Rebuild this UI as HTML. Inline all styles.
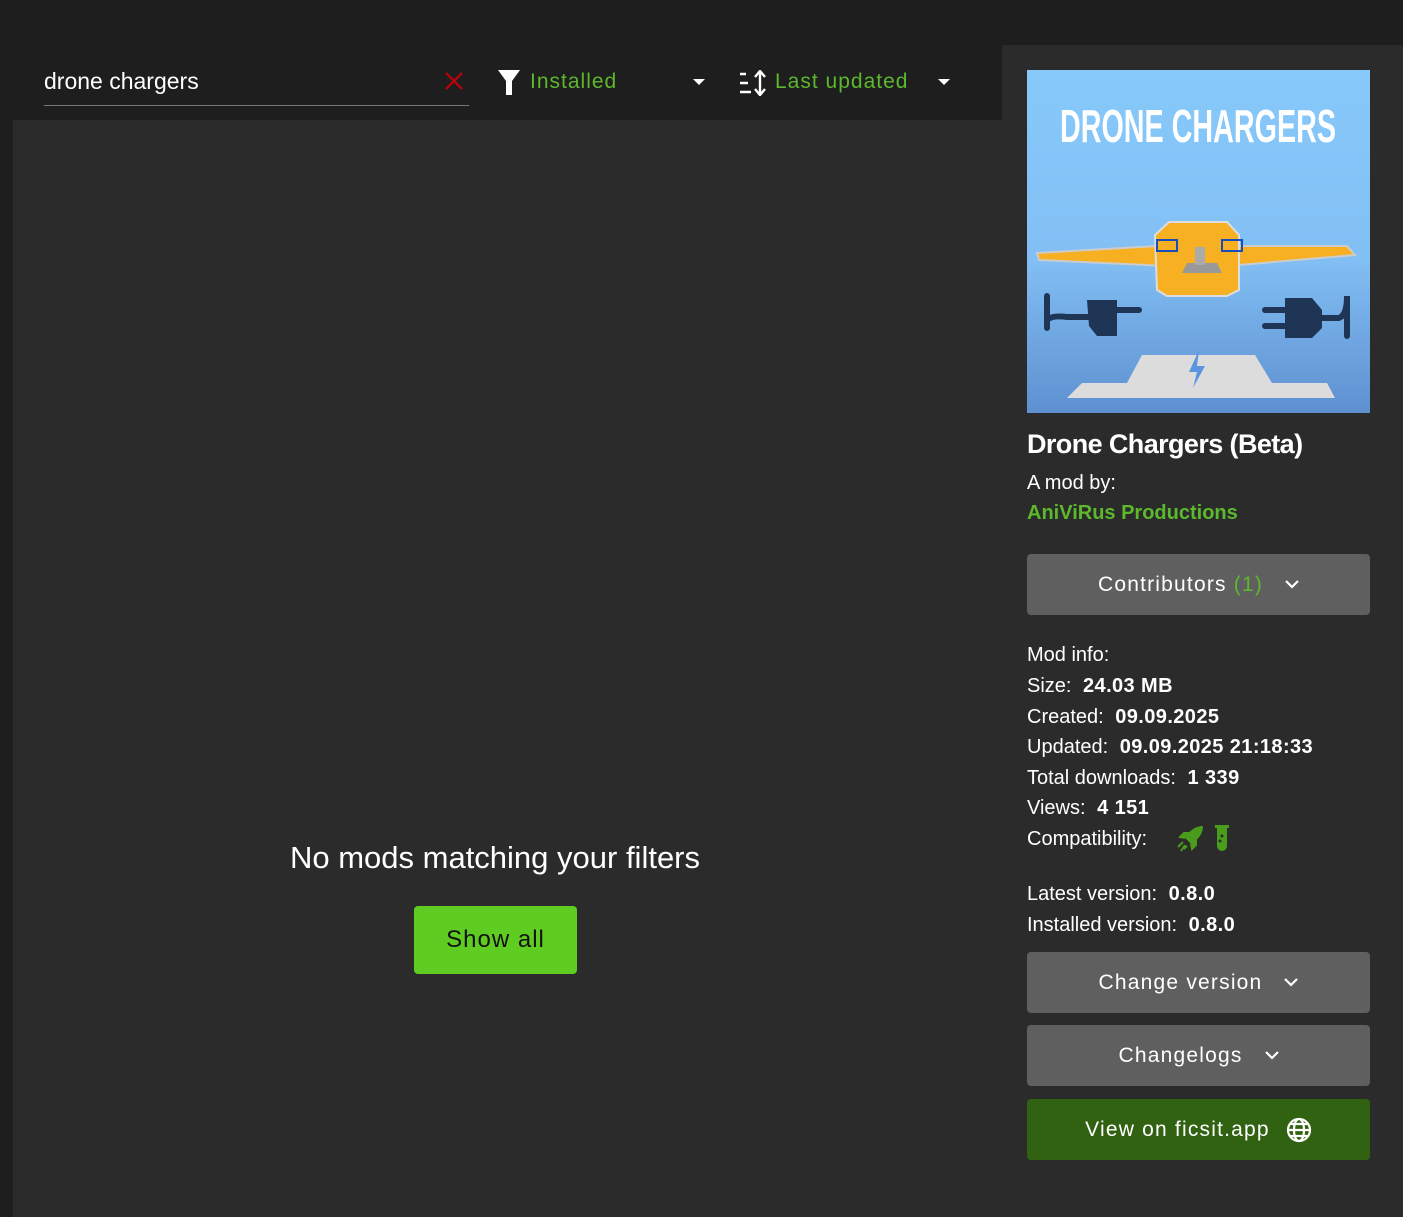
<!DOCTYPE html>
<html><head><meta charset="utf-8"><style>
*{margin:0;padding:0;box-sizing:border-box}
body{width:1403px;height:1217px;background:#1e1e1e;font-family:"Liberation Sans",sans-serif;color:#fff;position:relative;overflow:hidden}
.a{position:absolute}
.left{left:13px;top:120px;width:989px;height:1097px;background:#2b2b2b}
.right{left:1002px;top:45px;width:401px;height:1172px;background:#2b2b2b}
.btn{position:absolute;left:1027px;width:343px;height:61px;background:#5f5f5f;border-radius:4px;display:flex;align-items:center;justify-content:center;font-size:21px;letter-spacing:1.2px;color:#fff}
.info{position:absolute;left:1027px;font-size:20px;white-space:nowrap}
.info b{margin-left:6px;letter-spacing:.4px}
</style></head><body>
<div class="a left"></div>
<div class="a right"></div>
<div class="a" style="left:44px;top:68px;font-size:23px">drone chargers</div>
<div class="a" style="left:44px;top:105px;width:425px;height:1px;background:#777"></div>
<svg class="a" style="left:444px;top:71px" width="20" height="20"><path d="M2 2L18 18M18 2L2 18" stroke="#c0000a" stroke-width="2.2"/></svg>
<svg class="a" style="left:498px;top:70px" width="22" height="25"><path d="M0 0H22L14 11V25H8V11Z" fill="#fff"/></svg>
<div class="a" style="left:530px;top:70px;font-size:21px;color:#5cb82c;letter-spacing:1px">Installed</div>
<svg class="a" style="left:693px;top:79px" width="12" height="7"><path d="M0 0H12L6 6Z" fill="#fff"/></svg>
<svg class="a" style="left:740px;top:70px" width="28" height="26"><path d="M0 4H6M0 13H8M0 22H11" stroke="#fff" stroke-width="2.4"/><path d="M20 2V24M15 7L20 1L25 7M15 19L20 25L25 19" stroke="#fff" stroke-width="2.4" fill="none"/></svg>
<div class="a" style="left:775px;top:70px;font-size:21px;color:#5cb82c;letter-spacing:1px">Last updated</div>
<svg class="a" style="left:938px;top:79px" width="12" height="7"><path d="M0 0H12L6 6Z" fill="#fff"/></svg>
<div class="a" style="left:0;width:990px;top:840px;text-align:center;font-size:31px">No mods matching your filters</div>
<div class="a" style="left:414px;top:906px;width:163px;height:68px;background:#5fcc22;border-radius:4px;color:#111;font-size:24px;letter-spacing:1px;display:flex;align-items:center;justify-content:center">Show all</div>
<svg class="a" style="left:1027px;top:70px" width="343" height="343" viewBox="0 0 343 343">
<defs><linearGradient id="g" x1="0" y1="0" x2="0" y2="1"><stop offset="0" stop-color="#87c9fb"/><stop offset=".55" stop-color="#82bff4"/><stop offset="1" stop-color="#5e90d0"/></linearGradient></defs>
<rect width="343" height="343" fill="url(#g)"/>
<text x="171" y="72" text-anchor="middle" font-family="Liberation Sans Narrow,Liberation Sans,sans-serif" font-weight="bold" font-size="46" fill="#fff" textLength="276" lengthAdjust="spacingAndGlyphs">DRONE CHARGERS</text>
<path d="M10 183L130 176H320L328 185L200 196H140L12 190Z" fill="#f8b023" stroke="#ccc" stroke-width="2"/>
<path d="M128 165L142 152H200L212 165V220L200 226H140L130 220Z" fill="#f8b023" stroke="#ddd" stroke-width="2"/>
<path d="M160 193H190L195 203H155Z" fill="#999"/><rect x="168" y="177" width="10" height="18" fill="#aaa"/>
<rect x="130" y="170" width="20" height="11" fill="none" stroke="#1a4db8" stroke-width="2"/><rect x="195" y="170" width="20" height="11" fill="none" stroke="#1a4db8" stroke-width="2"/>
<path d="M60 230H90V266H70L62 256Z" fill="#1f3555"/><path d="M90 240H112M20 226V258M20 250Q25 245 40 247H62" stroke="#1f3555" stroke-width="6" fill="none" stroke-linecap="round"/>
<path d="M258 228H285L295 240V258L285 268H258Z" fill="#1f3555"/><path d="M238 240H258M238 256H258M295 248H312Q320 245 320 226V266" stroke="#1f3555" stroke-width="6" fill="none" stroke-linecap="round"/>
<path d="M115 285H228L245 313H300L308 328H40L55 313H100Z" fill="#dcdcdc"/>
<path d="M172 280L162 302H170L166 318L178 296H170Z" fill="#5b95e0"/>
</svg>
<div class="a" style="left:1027px;top:429px;font-size:27px;font-weight:bold;letter-spacing:-.6px">Drone Chargers (Beta)</div>
<div class="info" style="top:472px">A mod by:</div>
<div class="info" style="top:502px;color:#5cb82c;font-weight:bold">AniViRus Productions</div>
<div class="btn" style="top:554px">Contributors&nbsp;<span style="color:#5cb82c">(1)</span><svg style="margin-left:22px" width="14" height="9"><path d="M1 1L7 7L13 1" stroke="#fff" stroke-width="2.2" fill="none"/></svg></div>
<div class="info" style="top:644px">Mod info:</div>
<div class="info" style="top:675px">Size: <b>24.03 MB</b></div>
<div class="info" style="top:706px">Created: <b>09.09.2025</b></div>
<div class="info" style="top:736px">Updated: <b>09.09.2025 21:18:33</b></div>
<div class="info" style="top:767px">Total downloads: <b>1 339</b></div>
<div class="info" style="top:797px">Views: <b>4 151</b></div>
<div class="info" style="top:828px">Compatibility:</div>
<svg class="a" style="left:1177px;top:825px" width="28" height="27"><path d="M26 1C18 1 12 6 8 13L14 19C21 15 26 9 26 1Z" fill="#4a9c1c"/><path d="M8 13L3 12L7 8H12M14 19L15 24L19 20V15M6 17L1 22M8 20L4 26M10 21L7 24" stroke="#4a9c1c" stroke-width="2" fill="#4a9c1c"/></svg>
<svg class="a" style="left:1214px;top:825px" width="16" height="27"><path d="M1 1H15M3 1V21A5 5 0 0 0 13 21V1" fill="#4a9c1c"/><rect x="1" y="0" width="14" height="3" fill="#4a9c1c"/><circle cx="8" cy="11" r="1.5" fill="#2b2b2b"/><circle cx="6" cy="16" r="1.5" fill="#2b2b2b"/></svg>
<div class="info" style="top:883px">Latest version: <b>0.8.0</b></div>
<div class="info" style="top:914px">Installed version: <b>0.8.0</b></div>
<div class="btn" style="top:952px">Change version<svg style="margin-left:22px" width="14" height="9"><path d="M1 1L7 7L13 1" stroke="#fff" stroke-width="2.2" fill="none"/></svg></div>
<div class="btn" style="top:1025px">Changelogs<svg style="margin-left:22px" width="14" height="9"><path d="M1 1L7 7L13 1" stroke="#fff" stroke-width="2.2" fill="none"/></svg></div>
<div class="btn" style="top:1099px;background:#306212">View on ficsit.app<svg style="margin-left:16px" width="26" height="26" viewBox="0 0 26 26"><g stroke="#fff" stroke-width="2.2" fill="none"><circle cx="13" cy="13" r="11"/><ellipse cx="13" cy="13" rx="5" ry="11"/><path d="M2 13H24M4 7H22M4 19H22"/></g></svg></div>
</body></html>
